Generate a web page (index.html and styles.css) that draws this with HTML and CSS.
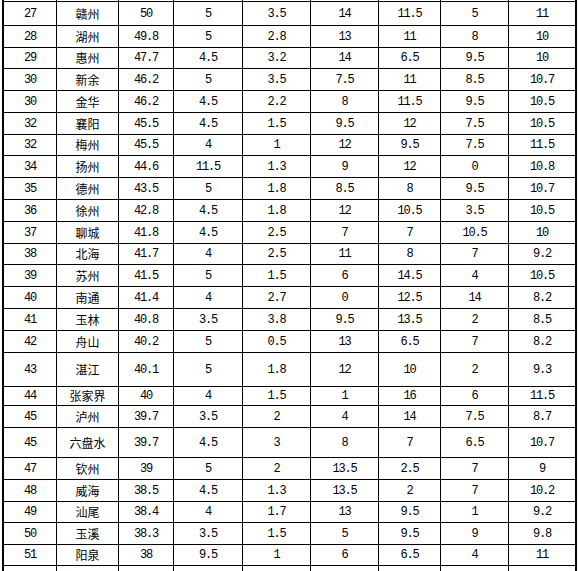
FILE: index.html
```html
<!DOCTYPE html>
<html>
<head>
<meta charset="utf-8">
<link rel="stylesheet" href="styles.css">
</head>
<body>
<div class="table">
<div class="row h2"><div></div><div></div><div></div><div></div><div></div><div></div><div></div><div></div><div></div></div>
<div class="row h24"><div>27</div><div class="cn">赣州</div><div>50</div><div>5</div><div>3.5</div><div>14</div><div>11.5</div><div>5</div><div>11</div></div>
<div class="row h22"><div>28</div><div class="cn">湖州</div><div>49.8</div><div>5</div><div>2.8</div><div>13</div><div>11</div><div>8</div><div>10</div></div>
<div class="row h21"><div>29</div><div class="cn">惠州</div><div>47.7</div><div>4.5</div><div>3.2</div><div>14</div><div>6.5</div><div>9.5</div><div>10</div></div>
<div class="row h22"><div>30</div><div class="cn">新余</div><div>46.2</div><div>5</div><div>3.5</div><div>7.5</div><div>11</div><div>8.5</div><div>10.7</div></div>
<div class="row h22"><div>30</div><div class="cn">金华</div><div>46.2</div><div>4.5</div><div>2.2</div><div>8</div><div>11.5</div><div>9.5</div><div>10.5</div></div>
<div class="row h22"><div>32</div><div class="cn">襄阳</div><div>45.5</div><div>4.5</div><div>1.5</div><div>9.5</div><div>12</div><div>7.5</div><div>10.5</div></div>
<div class="row h21"><div>32</div><div class="cn">梅州</div><div>45.5</div><div>4</div><div>1</div><div>12</div><div>9.5</div><div>7.5</div><div>11.5</div></div>
<div class="row h22"><div>34</div><div class="cn">扬州</div><div>44.6</div><div>11.5</div><div>1.3</div><div>9</div><div>12</div><div>0</div><div>10.8</div></div>
<div class="row h22"><div>35</div><div class="cn">德州</div><div>43.5</div><div>5</div><div>1.8</div><div>8.5</div><div>8</div><div>9.5</div><div>10.7</div></div>
<div class="row h22"><div>36</div><div class="cn">徐州</div><div>42.8</div><div>4.5</div><div>1.8</div><div>12</div><div>10.5</div><div>3.5</div><div>10.5</div></div>
<div class="row h22"><div>37</div><div class="cn">聊城</div><div>41.8</div><div>4.5</div><div>2.5</div><div>7</div><div>7</div><div>10.5</div><div>10</div></div>
<div class="row h21"><div>38</div><div class="cn">北海</div><div>41.7</div><div>4</div><div>2.5</div><div>11</div><div>8</div><div>7</div><div>9.2</div></div>
<div class="row h22"><div>39</div><div class="cn">苏州</div><div>41.5</div><div>5</div><div>1.5</div><div>6</div><div>14.5</div><div>4</div><div>10.5</div></div>
<div class="row h22"><div>40</div><div class="cn">南通</div><div>41.4</div><div>4</div><div>2.7</div><div>0</div><div>12.5</div><div>14</div><div>8.2</div></div>
<div class="row h22"><div>41</div><div class="cn">玉林</div><div>40.8</div><div>3.5</div><div>3.8</div><div>9.5</div><div>13.5</div><div>2</div><div>8.5</div></div>
<div class="row h22"><div>42</div><div class="cn">舟山</div><div>40.2</div><div>5</div><div>0.5</div><div>13</div><div>6.5</div><div>7</div><div>8.2</div></div>
<div class="row h34"><div>43</div><div class="cn">湛江</div><div>40.1</div><div>5</div><div>1.8</div><div>12</div><div>10</div><div>2</div><div>9.3</div></div>
<div class="row h19"><div>44</div><div class="cn">张家界</div><div>40</div><div>4</div><div>1.5</div><div>1</div><div>16</div><div>6</div><div>11.5</div></div>
<div class="row h22"><div>45</div><div class="cn">泸州</div><div>39.7</div><div>3.5</div><div>2</div><div>4</div><div>14</div><div>7.5</div><div>8.7</div></div>
<div class="row h30"><div>45</div><div class="cn">六盘水</div><div>39.7</div><div>4.5</div><div>3</div><div>8</div><div>7</div><div>6.5</div><div>10.7</div></div>
<div class="row h22"><div>47</div><div class="cn">钦州</div><div>39</div><div>5</div><div>2</div><div>13.5</div><div>2.5</div><div>7</div><div>9</div></div>
<div class="row h22"><div>48</div><div class="cn">威海</div><div>38.5</div><div>4.5</div><div>1.3</div><div>13.5</div><div>2</div><div>7</div><div>10.2</div></div>
<div class="row h21"><div>49</div><div class="cn">汕尾</div><div>38.4</div><div>4</div><div>1.7</div><div>13</div><div>9.5</div><div>1</div><div>9.2</div></div>
<div class="row h22"><div>50</div><div class="cn">玉溪</div><div>38.3</div><div>3.5</div><div>1.5</div><div>5</div><div>9.5</div><div>9</div><div>9.8</div></div>
<div class="row h21"><div>51</div><div class="cn">阳泉</div><div>38</div><div>9.5</div><div>1</div><div>6</div><div>6.5</div><div>4</div><div>11</div></div>
<div class="row h22"><div></div><div></div><div></div><div></div><div></div><div></div><div></div><div></div><div></div></div>
</div>
</body>
</html>
```
FILE: styles.css
```css
html, body {
  margin: 0;
  padding: 0;
  background: #ffffff;
}
body {
  width: 578px;
  height: 571px;
  overflow: hidden;
}
.table {
  margin-left: 2px;
  width: 575px;
  box-sizing: border-box;
  border-left: 2px solid #000;
  border-right: 2px solid #000;
}
.row {
  display: grid;
  grid-template-columns: 53px 62px 55px 69px 68px 68px 62px 68px 66px;
}
.row > div {
  box-sizing: border-box;
  border-right: 1px solid #000;
  border-bottom: 1px solid #000;
  display: flex;
  align-items: center;
  justify-content: center;
  font-family: "Liberation Mono", "DejaVu Sans Mono", monospace;
  font-size: 12px;
  line-height: 12px;
  letter-spacing: -1.2px;
  color: #000;
  white-space: nowrap;
  overflow: hidden;
}
.row > div:last-child {
  border-right: none;
}
.row > div.cn {
  font-family: "Noto Sans CJK SC", sans-serif;
  letter-spacing: 0;
  font-size: 12px;
  line-height: 12px;
}
.h2 { height: 2px; }
.h19 { height: 19px; }
.h21 { height: 21px; }
.h22 { height: 22px; }
.h24 { height: 24px; }
.h30 { height: 30px; }
.h34 { height: 34px; }
```
